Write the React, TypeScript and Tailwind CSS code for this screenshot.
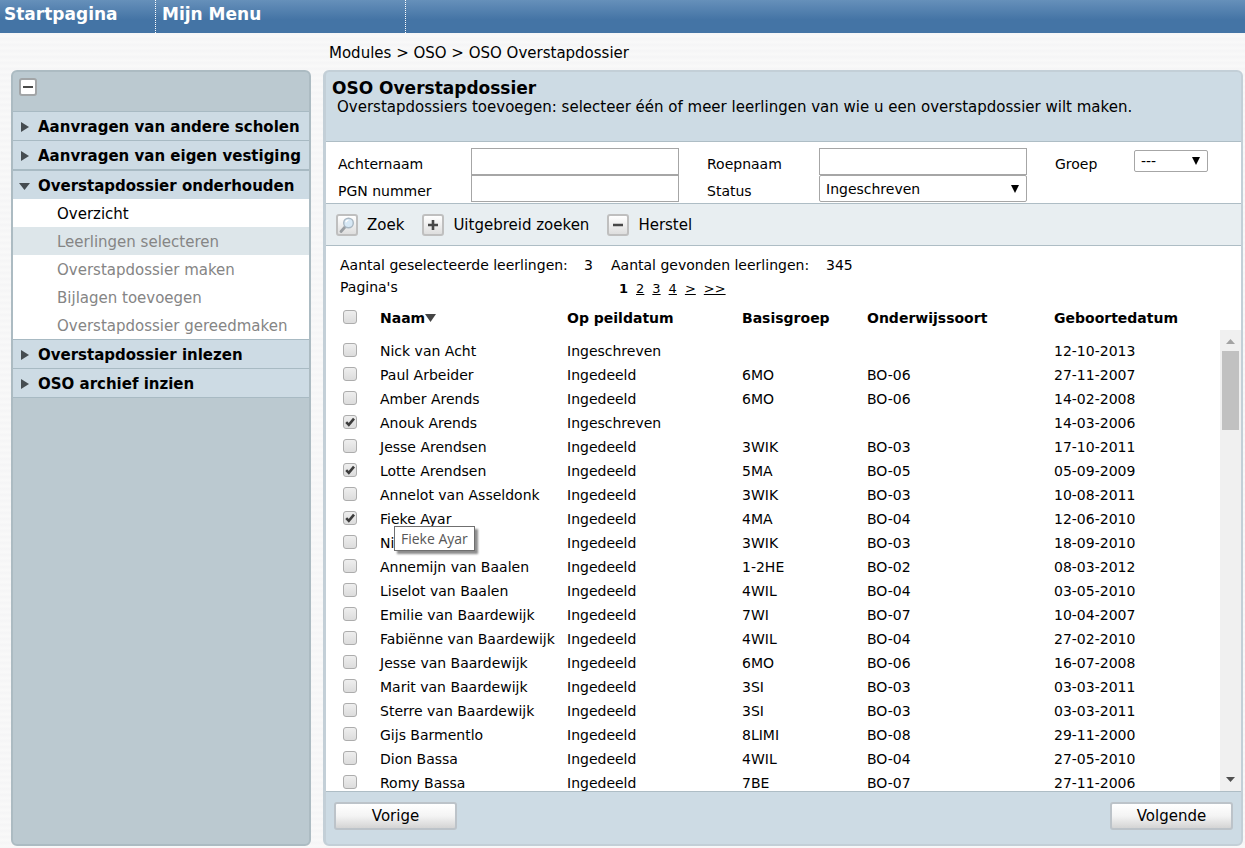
import React, { useState } from 'react';

type Pupil = {
  name: string;
  status: string;
  group: string;
  kind: string;
  born: string;
  selected?: boolean;
};

const pupils: Pupil[] = [
  { name: 'Nick van Acht', status: 'Ingeschreven', group: '', kind: '', born: '12-10-2013' },
  { name: 'Paul Arbeider', status: 'Ingedeeld', group: '6MO', kind: 'BO-06', born: '27-11-2007' },
  { name: 'Amber Arends', status: 'Ingedeeld', group: '6MO', kind: 'BO-06', born: '14-02-2008' },
  { name: 'Anouk Arends', status: 'Ingeschreven', group: '', kind: '', born: '14-03-2006', selected: true },
  { name: 'Jesse Arendsen', status: 'Ingedeeld', group: '3WIK', kind: 'BO-03', born: '17-10-2011' },
  { name: 'Lotte Arendsen', status: 'Ingedeeld', group: '5MA', kind: 'BO-05', born: '05-09-2009', selected: true },
  { name: 'Annelot van Asseldonk', status: 'Ingedeeld', group: '3WIK', kind: 'BO-03', born: '10-08-2011' },
  { name: 'Fieke Ayar', status: 'Ingedeeld', group: '4MA', kind: 'BO-04', born: '12-06-2010', selected: true },
  { name: 'Ni', status: 'Ingedeeld', group: '3WIK', kind: 'BO-03', born: '18-09-2010' },
  { name: 'Annemijn van Baalen', status: 'Ingedeeld', group: '1-2HE', kind: 'BO-02', born: '08-03-2012' },
  { name: 'Liselot van Baalen', status: 'Ingedeeld', group: '4WIL', kind: 'BO-04', born: '03-05-2010' },
  { name: 'Emilie van Baardewijk', status: 'Ingedeeld', group: '7WI', kind: 'BO-07', born: '10-04-2007' },
  { name: 'Fabiënne van Baardewijk', status: 'Ingedeeld', group: '4WIL', kind: 'BO-04', born: '27-02-2010' },
  { name: 'Jesse van Baardewijk', status: 'Ingedeeld', group: '6MO', kind: 'BO-06', born: '16-07-2008' },
  { name: 'Marit van Baardewijk', status: 'Ingedeeld', group: '3SI', kind: 'BO-03', born: '03-03-2011' },
  { name: 'Sterre van Baardewijk', status: 'Ingedeeld', group: '3SI', kind: 'BO-03', born: '03-03-2011' },
  { name: 'Gijs Barmentlo', status: 'Ingedeeld', group: '8LIMI', kind: 'BO-08', born: '29-11-2000' },
  { name: 'Dion Bassa', status: 'Ingedeeld', group: '4WIL', kind: 'BO-04', born: '27-05-2010' },
  { name: 'Romy Bassa', status: 'Ingedeeld', group: '7BE', kind: 'BO-07', born: '27-11-2006' },
];

const menu = [
  { label: 'Aanvragen van andere scholen' },
  { label: 'Aanvragen van eigen vestiging' },
  {
    label: 'Overstapdossier onderhouden',
    items: ['Overzicht', 'Leerlingen selecteren', 'Overstapdossier maken', 'Bijlagen toevoegen', 'Overstapdossier gereedmaken'],
  },
  { label: 'Overstapdossier inlezen' },
  { label: 'OSO archief inzien' },
];

const Triangle = ({ className, dir }: { className: string; dir: 'up' | 'down' | 'right' }) => (
  <svg viewBox="0 0 10 10" preserveAspectRatio="none" className={className} fill="currentColor" aria-hidden="true">
    {dir === 'up' && <path d="M5 0 10 10H0Z" />}
    {dir === 'down' && <path d="M0 0H10L5 10Z" />}
    {dir === 'right' && <path d="M0 0 10 5 0 10Z" />}
  </svg>
);

const Checkbox = ({ label, defaultChecked }: { label: string; defaultChecked?: boolean }) => (
  <span className="relative block size-3.5">
    <input
      type="checkbox"
      aria-label={label}
      defaultChecked={defaultChecked}
      className="peer block size-3.5 appearance-none rounded-[3px] border border-[#adadad] bg-linear-to-b from-[#eeeeee] to-[#dcdcdc]"
    />
    <svg viewBox="0 0 14 14" className="pointer-events-none absolute inset-0 hidden size-3.5 peer-checked:block" aria-hidden="true">
      <path d="M3.2 7.2 5.8 9.8 11 3.6" fill="none" stroke="#3c3c3c" strokeWidth="2.6" />
    </svg>
  </span>
);

const Select = ({ id, className, options }: { id: string; className: string; options: string[] }) => (
  <div className="relative">
    <select id={id} className={`block w-full appearance-none rounded-[2px] border border-[#a6a6a6] bg-white px-1.5 text-sm ${className}`}>
      {options.map((option) => (
        <option key={option}>{option}</option>
      ))}
    </select>
    <Triangle dir="down" className="pointer-events-none absolute top-1/2 right-2 -mt-1 h-2 w-2 text-black" />
  </div>
);

const ToolButton = ({ label, children }: { label: string; children: React.ReactNode }) => (
  <button type="button" className="flex items-center gap-[9px] text-[15px]">
    <span className="flex size-[22px] items-center justify-center rounded-[3px] border-2 border-[#bfbfbf] bg-linear-to-b from-white to-[#dedede]">
      {children}
    </span>
    <span className="pt-0.5">{label}</span>
  </button>
);

const inputClass = 'block h-[27px] w-full border border-[#a6a6a6] bg-white px-1.5 text-sm';
const wideButton =
  'h-7 w-[123px] rounded-[3px] border-2 border-[#bcc3c9] bg-linear-to-b from-white via-[#f4f4f4] to-[#d4d4d4] text-[15px] leading-6';

const Sidebar = () => {
  const [open, setOpen] = useState('Overstapdossier onderhouden');

  return (
    <nav className="w-[300px] shrink-0 rounded-md border-2 border-[#acbbc2] bg-[#bbc9d0]">
      <div className="h-[39px] px-1.5 pt-1.5">
        <button
          type="button"
          aria-label="Menu inklappen"
          className="flex size-[18px] items-center justify-center rounded-[3px] border-2 border-[#a2a5a7] bg-white"
        >
          <span className="h-0.5 w-2.5 bg-[#4a4a4a]" />
        </button>
      </div>
      <ul className="border-b border-[#a8bac3]">
        {menu.map(({ label, items }) => (
          <li key={label}>
            <button
              type="button"
              onClick={() => setOpen(label)}
              className={`flex w-full items-center border-[#a8bac3] bg-[#cddbe4] pt-0.5 pl-2 text-left text-[15px] font-bold whitespace-nowrap ${
                items ? 'h-[30px] border-t-2' : 'h-[29px] border-t'
              }`}
            >
              <span className="flex w-[17px]">
                {items && open === label ? (
                  <Triangle dir="down" className="-ml-0.5 h-[7px] w-[11px] text-[#454c50]" />
                ) : (
                  <Triangle dir="right" className="h-[10px] w-2 text-[#454c50]" />
                )}
              </span>
              {label}
            </button>
            {items && open === label && (
              <ul className="bg-white text-[15px]">
                {items.map((item, i) => (
                  <li key={item}>
                    <a
                      href="#"
                      className={`block h-7 pl-11 leading-[30px] ${i === 0 ? 'text-black' : 'text-[#858585]'} ${i === 1 ? 'bg-[#dde6ea]' : ''}`}
                    >
                      {item}
                    </a>
                  </li>
                ))}
              </ul>
            )}
          </li>
        ))}
      </ul>
    </nav>
  );
};

const SearchForm = () => (
  <form className="grid grid-cols-[133px_208px_140px_208px_107px_74px] border-b border-[#aebdc5] bg-white pt-1.5 pb-px pl-3 text-sm">
    <label htmlFor="achternaam" className="pt-1.5">Achternaam</label>
    <input id="achternaam" type="text" className={inputClass} />
    <label htmlFor="roepnaam" className="pt-1.5 pl-7">Roepnaam</label>
    <input id="roepnaam" type="text" className={inputClass} />
    <label htmlFor="groep" className="pt-1.5 pl-7">Groep</label>
    <div className="pt-0.5">
      <Select id="groep" className="h-[22px]" options={['---']} />
    </div>
    <label htmlFor="pgn" className="pt-1.5">PGN nummer</label>
    <input id="pgn" type="text" className={inputClass} />
    <label htmlFor="status" className="pt-1.5 pl-7">Status</label>
    <Select id="status" className="h-[27px]" options={['Ingeschreven']} />
  </form>
);

const PupilTable = () => (
  <div className="flex min-h-0 flex-1">
    <div className="min-w-0 flex-1 overflow-hidden">
      <table className="w-full table-fixed text-left text-sm leading-6">
        <thead>
          <tr className="h-[33px] align-top">
            <th className="w-[54px] pt-1 pl-[17px]">
              <Checkbox label="Alles selecteren" />
            </th>
            <th className="w-[187px]">
              <button type="button" className="flex items-center font-bold">
                Naam
                <Triangle dir="down" className="h-2 w-[11px] text-[#454545]" />
              </button>
            </th>
            <th className="w-[175px]">Op peildatum</th>
            <th className="w-[125px]">Basisgroep</th>
            <th className="w-[187px]">Onderwijssoort</th>
            <th>Geboortedatum</th>
          </tr>
        </thead>
        <tbody className="whitespace-nowrap">
          {pupils.map((pupil) => (
            <tr key={pupil.name} className="h-6">
              <td className="pb-0.5 pl-[17px]">
                <Checkbox label={pupil.name} defaultChecked={pupil.selected} />
              </td>
              <td className="relative">
                {pupil.name}
                {pupil.name === 'Fieke Ayar' && (
                  <span
                    role="tooltip"
                    className="absolute top-[19px] left-3.5 z-10 h-[25px] border border-[#6f6f6f] bg-white px-1.5 font-['Open_Sans',sans-serif] text-sm leading-[23px] text-[#575757] shadow-[3px_3px_2px_#8c8c8c]"
                  >
                    Fieke Ayar
                  </span>
                )}
              </td>
              <td>{pupil.status}</td>
              <td>{pupil.group}</td>
              <td>{pupil.kind}</td>
              <td>{pupil.born}</td>
            </tr>
          ))}
        </tbody>
      </table>
    </div>
    {/* Scroll track */}
    <div className="mt-6 flex w-[21px] flex-col items-center bg-[#f0f0f0]">
      <Triangle dir="up" className="mt-[9px] h-[5px] w-[9px] text-[#a3a3a3]" />
      <div className="mt-[7px] h-[79px] w-[17px] bg-[#c1c1c1]" />
      <Triangle dir="down" className="mt-auto mb-[9px] h-[5px] w-[9px] text-[#505050]" />
    </div>
  </div>
);

const App = () => {
  return (
    <div className="flex h-screen flex-col bg-[repeating-linear-gradient(#f9f9f9_0px,#f5f5f6_3px,#f9f9f9_6px)] font-['DejaVu_Sans',Verdana,sans-serif] text-black">
      <header className="flex h-[33px] shrink-0 bg-linear-to-b from-[#6690ba] to-[#4474a5] to-60% text-[17px] leading-7 font-bold text-white">
        <a href="#" className="w-[156px] border-r border-dotted border-white pl-1">Startpagina</a>
        <a href="#" className="w-[250px] border-r border-dotted border-white pl-1.5">Mijn Menu</a>
      </header>

      <p className="h-[37px] shrink-0 pl-[329px] text-[15px] leading-10">Modules &gt; OSO &gt; OSO Overstapdossier</p>

      <div className="flex min-h-0 flex-1 gap-3 pr-0.5 pb-0.5 pl-[11px]">
        <Sidebar />

        <main className="flex min-w-0 flex-1 flex-col overflow-hidden rounded-md border-2 border-l-3 border-[#c3cfd7] bg-[#cddbe4]">
          <div className="h-[70px] shrink-0 border-b border-[#aebdc5] pt-1 pl-1.5">
            <h1 className="text-[17px] leading-6 font-bold">OSO Overstapdossier</h1>
            <p className="-mt-1 pl-[5px] text-[15px] leading-[22px]">
              Overstapdossiers toevoegen: selecteer één of meer leerlingen van wie u een overstapdossier wilt maken.
            </p>
          </div>

          <SearchForm />

          <div className="flex h-[42px] shrink-0 items-center gap-[18px] border-b border-[#aebdc5] bg-[#e8eef1] pl-2.5">
            <ToolButton label="Zoek">
              <svg viewBox="0 0 18 18" className="size-[18px]" fill="none" aria-hidden="true">
                <path d="M7 11 3 15.5" stroke="#9a9ea2" strokeWidth="2.8" strokeLinecap="round" />
                <circle cx="10.5" cy="7" r="4.8" fill="#d7e8f5" stroke="#aab8c3" strokeWidth="1.4" />
                <path d="M7.8 6.2a3 3 0 0 1 2.6-2.1" stroke="#fff" strokeWidth="1.3" />
              </svg>
            </ToolButton>
            <ToolButton label="Uitgebreid zoeken">
              <svg viewBox="0 0 10 10" className="size-2.5" aria-hidden="true">
                <path d="M0 5H10M5 0V10" stroke="#484848" strokeWidth="2.6" />
              </svg>
            </ToolButton>
            <ToolButton label="Herstel">
              <svg viewBox="0 0 10 10" className="size-2.5" aria-hidden="true">
                <path d="M0 5H10" stroke="#484848" strokeWidth="2.4" />
              </svg>
            </ToolButton>
          </div>

          <section className="flex min-h-0 flex-1 flex-col bg-white">
            <div className="pt-2 pb-1.5 pl-3.5 text-sm leading-[22px]">
              <div className="flex">
                <span className="w-[244px]">Aantal geselecteerde leerlingen:</span>
                <span className="w-[27px]">3</span>
                <span className="w-[215px]">Aantal gevonden leerlingen:</span>
                <span>345</span>
              </div>
              <div className="flex">
                <span className="w-[279px]">Pagina's</span>
                <div className="flex gap-2 pt-0.5 text-[13px]">
                  <span className="font-bold">1</span>
                  <a href="#" className="underline">2</a>
                  <a href="#" className="underline">3</a>
                  <a href="#" className="underline">4</a>
                  <a href="#" className="underline">&gt;</a>
                  <a href="#" className="underline">&gt;&gt;</a>
                </div>
              </div>
            </div>
            <PupilTable />
          </section>

          <footer className="flex h-[53px] shrink-0 items-start justify-between border-t border-[#aebdc5] px-2 pt-2.5">
            <button type="button" className={wideButton}>Vorige</button>
            <button type="button" className={wideButton}>Volgende</button>
          </footer>
        </main>
      </div>
    </div>
  );
};

export default App;
